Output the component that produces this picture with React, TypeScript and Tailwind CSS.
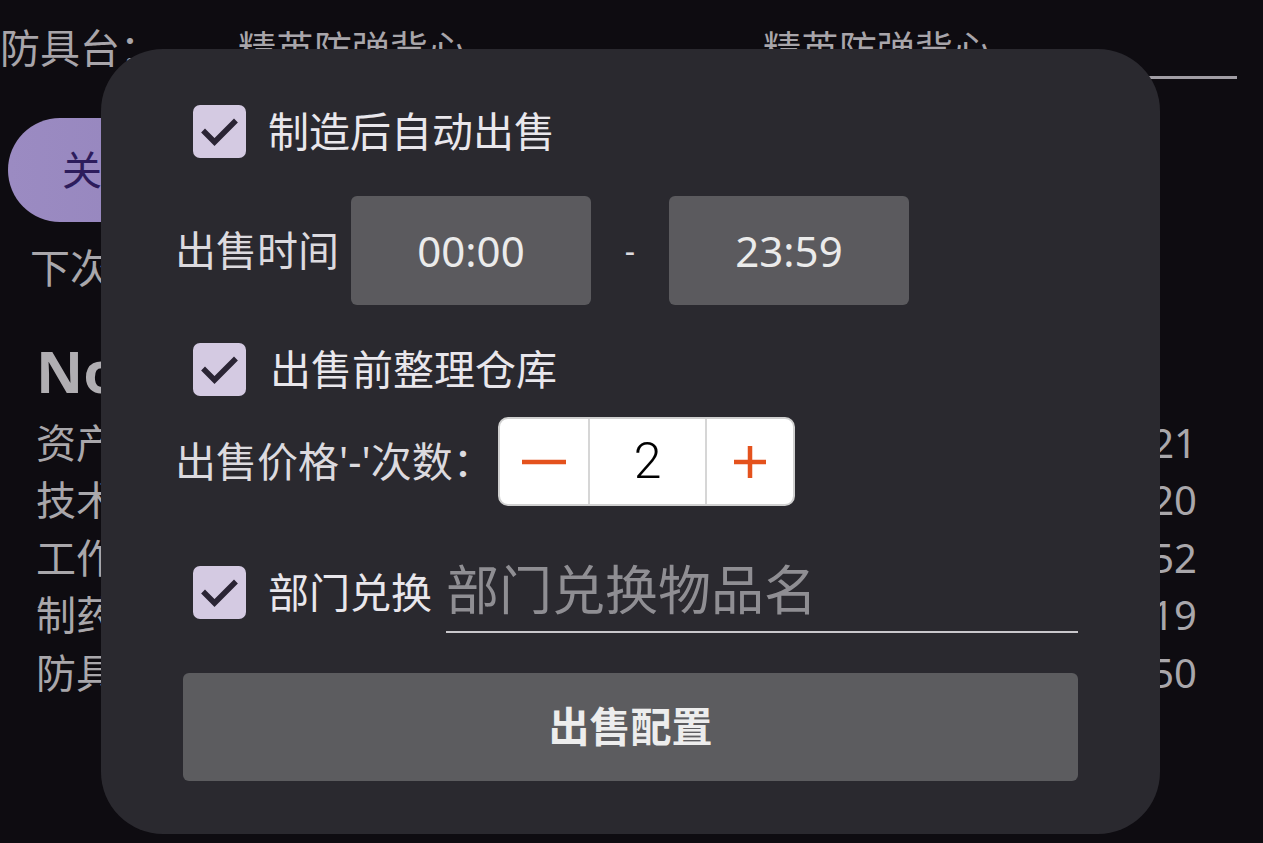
import { useState } from 'react';

const font = "font-['Noto_Sans','Noto_Sans_CJK_SC',sans-serif]";

function CheckBox() {
  return (
    <div className="w-[53px] h-[53px] rounded-[7px] bg-[#d4cae2] flex items-center justify-center shrink-0">
      <svg width="53" height="53" viewBox="0 0 53 53" fill="none">
        <path d="M12 27.5 L21.5 37 L41 17.5" stroke="#2a2434" strokeWidth="5.5" strokeLinecap="square" />
      </svg>
    </div>
  );
}

function Stats() {
  const rows = [
    ['资产', '13 221'],
    ['技术', '1 020'],
    ['工作', '8 352'],
    ['制药', '219'],
    ['防具', '2 050'],
  ];
  return (
    <div className="flex flex-col ml-[36px] mr-[66px]">
      {rows.map(([k, v]) => (
        <div key={k} className="flex justify-between h-[57.5px] items-center text-[40px] text-[#a9a7ab]">
          <span>{k}</span>
          <span>{v}</span>
        </div>
      ))}
    </div>
  );
}

export default function App() {
  const [count, setCount] = useState(2);

  return (
    <div className={`relative w-[1263px] h-[843px] overflow-hidden bg-[#0e0c11] ${font}`}>
      {/* --- BACKGROUND PAGE --- */}
      <div className="flex flex-col">
        <div className="flex items-start h-[100px] -mt-[2px]">
          <span className="text-[40px] leading-[100px] text-[#a8a5aa] h-[100px]">防具台：</span>
          <div className="ml-[60px] w-[470px] h-[81px] border-b-2 border-[#9d9aa0] text-[38px] leading-[100px] text-[#a8a5aa] pl-[18px]">精英防弹背心</div>
          <div className="ml-[55px] w-[492px] h-[81px] border-b-[3px] border-[#a19ea5] text-[38px] leading-[100px] text-[#a8a5aa] pl-[18px]">精英防弹背心</div>
        </div>
        <div className="ml-[8px] mt-[20px] w-[380px] h-[104px] rounded-full bg-gradient-to-r from-[#9b8bc2] to-[#8f7fb8] flex items-center pl-[54px] text-[40px] text-[#2d1c5c]">
          关闭
        </div>
        <div className="ml-[30px] mt-[22px] text-[40px] text-[#a9a7ab] leading-[48px]">下次</div>
        <div className="ml-[36px] mt-[48px] text-[58px] font-bold text-[#b0aeb2] leading-[62px]">Normal</div>
        <div className="mt-[12px]">
          <Stats />
        </div>
      </div>

      {/* --- SELL CONFIG DIALOG --- */}
      <div className="absolute left-[101px] top-[49px] w-[1059px] h-[785px] rounded-[62px] bg-[#2a292f] px-[82px] pt-[56px] pb-[53px] flex flex-col">
        <div className="flex items-center h-[53px] ml-[10px]">
          <CheckBox />
          <span className="ml-[22px] text-[41px] text-[#e9e7ec]">制造后自动出售</span>
        </div>

        <div className="flex items-center h-[109px] mt-[38px] -ml-[8px]">
          <span className="text-[41px] text-[#dcdadf] w-[176px]">出售时间</span>
          <div className="w-[240px] h-[109px] rounded-[6px] bg-[#5b5a5e] flex items-center justify-center text-[42px] text-[#ebebeb]">00:00</div>
          <span className="w-[78px] text-center text-[32px] text-[#dcdadf]">-</span>
          <div className="w-[240px] h-[109px] rounded-[6px] bg-[#5b5a5e] flex items-center justify-center text-[42px] text-[#ebebeb]">23:59</div>
        </div>

        <div className="flex items-center h-[53px] mt-[38px] ml-[10px]">
          <CheckBox />
          <span className="ml-[24px] text-[41px] text-[#e9e7ec]">出售前整理仓库</span>
        </div>

        <div className="flex items-center h-[89px] mt-[21px] -ml-[8px]">
          <span className="text-[41px] text-[#dcdadf] w-[323px]">出售价格'-'次数：</span>
          <div className="flex h-[89px] w-[297px] rounded-[10px] border-2 border-[#d0d0d0] bg-white overflow-hidden">
            <button onClick={() => setCount(c => Math.max(0, c - 1))} className="w-[90px] flex items-center justify-center border-r-2 border-[#d6d6d6]">
              <svg width="44" height="6" viewBox="0 0 44 6"><rect width="44" height="4.5" y="0.75" fill="#e4521d" /></svg>
            </button>
            <div className="w-[115px] flex items-center justify-center text-[50px] font-light text-black font-['Roboto',sans-serif]">{count}</div>
            <button onClick={() => setCount(c => c + 1)} className="flex-1 flex items-center justify-center border-l-2 border-[#d6d6d6]">
              <svg width="32" height="32" viewBox="0 0 32 32">
                <rect x="0" y="13.75" width="32" height="4.5" fill="#e4521d" />
                <rect x="13.75" y="0" width="4.5" height="32" fill="#e4521d" />
              </svg>
            </button>
          </div>
        </div>

        <div className="flex items-start h-[73px] mt-[54px] ml-[10px]">
          <div className="mt-[6px]"><CheckBox /></div>
          <span className="ml-[22px] mt-[6px] h-[53px] leading-[53px] text-[41px] text-[#e9e7ec]">部门兑换</span>
          <input
            placeholder="部门兑换物品名"
            className="ml-[14px] flex-1 min-w-0 h-[73px] pb-[13px] bg-transparent border-b-2 border-[#c9c7cc] text-[53px] leading-[60px] text-[#e9e7ec] placeholder:text-[#8f8e93] outline-none"
          />
        </div>

        <button className="mt-[40px] h-[108px] w-full rounded-[6px] bg-[#5c5c5f] text-[41px] font-bold text-[#ededed]">
          出售配置
        </button>
      </div>
    </div>
  );
}
